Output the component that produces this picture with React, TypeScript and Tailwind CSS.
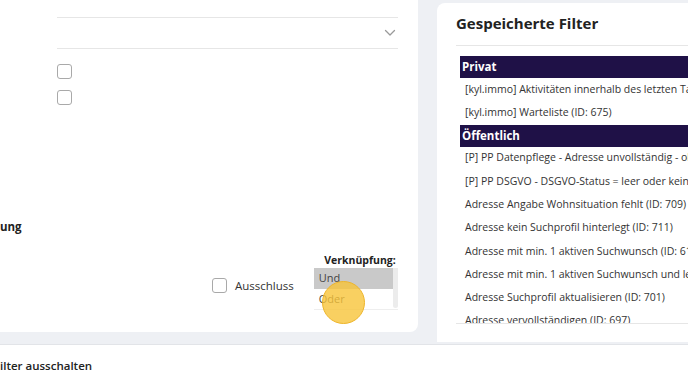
import React from 'react';

const privat = ['[kyl.immo] Aktivitäten innerhalb des letzten Tages (ID: 702)', '[kyl.immo] Warteliste (ID: 675)'];

const oeffentlich = [
  '[P] PP Datenpflege - Adresse unvollständig - ohne E-Mail (ID: 712)',
  '[P] PP DSGVO - DSGVO-Status = leer oder keine Angabe (ID: 713)',
  'Adresse Angabe Wohnsituation fehlt (ID: 709)',
  'Adresse kein Suchprofil hinterlegt (ID: 711)',
  'Adresse mit min. 1 aktiven Suchwunsch (ID: 610)',
  'Adresse mit min. 1 aktiven Suchwunsch und letzter Aktivität (ID: 611)',
  'Adresse Suchprofil aktualisieren (ID: 701)',
  'Adresse vervollständigen (ID: 697)',
];

function Checkbox({ className = '' }: { className?: string }) {
  return <span className={`block w-[15px] h-[15px] rounded-[3px] border border-[#a9a9a9] bg-white ${className}`} />;
}

function GroupHeader({ label }: { label: string }) {
  return (
    <div className="h-[22px] bg-[#1f1147] text-white font-bold text-[11.5px] flex items-center pl-[2px]">{label}</div>
  );
}

function Item({ label }: { label: string }) {
  return (
    <div className="h-[23.3px] flex items-center pl-[5px] text-[10.5px] text-[#333] whitespace-nowrap">
      {label}
    </div>
  );
}

export default function App() {
  return (
    <div className="w-[688px] h-[384px] overflow-hidden bg-white" style={{ fontFamily: '"Open Sans", "Liberation Sans", sans-serif' }}>
      <div className="h-[345px] bg-[#eef0f4] border-b border-[#e2e4e8] flex">
        {/* Left filter card */}
        <div className="relative w-[418px] h-[332px] shrink-0 bg-white rounded-br-lg">
          <div className="ml-[57px] mt-[17px] w-[341px] h-[32px] border-y border-[#e6e6e6] flex items-center justify-end pr-[2px]">
            <svg width="12" height="8" viewBox="0 0 12 8" fill="none">
              <path d="M1.5 1.5 6 6 10.5 1.5" stroke="#9a9a9a" strokeWidth="1.3" strokeLinecap="round" strokeLinejoin="round" />
            </svg>
          </div>
          <div className="ml-[57px] mt-[15px] flex flex-col gap-[11px]">
            <Checkbox />
            <Checkbox />
          </div>
          <div className="mt-[116px] text-[11.5px] font-bold text-[#222] leading-none">ung</div>
          <div className="mt-[22px] flex items-start">
            <div className="ml-[212px] mt-[22px] flex items-center gap-[8px]">
              <Checkbox className="w-[14px] h-[14px]" />
              <span className="text-[11.5px] text-[#333]">Ausschluss</span>
            </div>
            <div className="ml-[20px] flex flex-col items-end">
              <span className="text-[10.5px] font-bold text-[#222] leading-none mr-[2px]">Verknüpfung:</span>
              <div className="mt-[3px] w-[84px] h-[42px] flex border-b border-[#eeeeee]">
                <div className="flex-1 flex flex-col text-[11px] text-[#444]">
                  <div className="h-[22px] bg-[#c9c9c9] flex items-center pl-[5px]">Und</div>
                  <div className="h-[20px] flex items-center pl-[5px]">Oder</div>
                </div>
                <div className="w-[5px] h-[40px] bg-[#ececec] rounded-b-sm" />
              </div>
            </div>
          </div>
          <span className="absolute left-[322px] top-[281px] w-[43px] h-[43px] rounded-full bg-[#f7c43a]/80 border border-[#eeb52a]" />
        </div>

        {/* Saved filters card */}
        <div className="ml-[19px] mt-[3px] h-[339px] flex-1 bg-white rounded-tl-lg pl-[19px]">
          <h2 className="h-[42px] pt-[13px] text-[15px] font-bold text-[#222] leading-none">Gespeicherte Filter</h2>
          <div className="h-[279px] border-y border-[#e6e6e6] overflow-hidden pt-[10px] pl-[4px]">
            <GroupHeader label="Privat" />
            {privat.map((p) => (
              <Item key={p} label={p} />
            ))}
            <GroupHeader label="Öffentlich" />
            {oeffentlich.map((p) => (
              <Item key={p} label={p} />
            ))}
          </div>
        </div>
      </div>
      <div className="pt-[12px] text-[11.5px] font-semibold text-[#222]">ilter ausschalten</div>
    </div>
  );
}
